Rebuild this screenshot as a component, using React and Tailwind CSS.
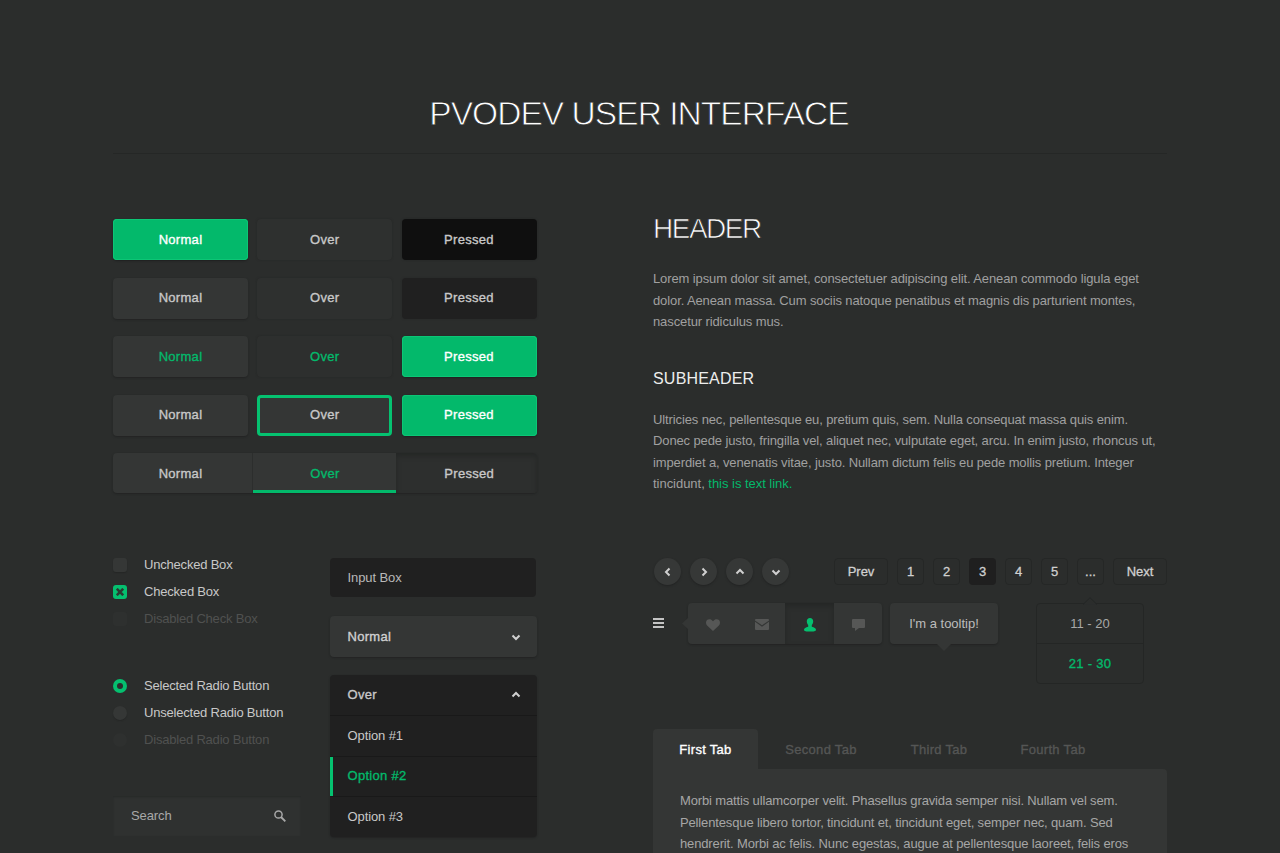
import { useState } from 'react';
import { clsx } from 'clsx';

const medium = '[-webkit-text-stroke:0.35px_currentColor] tracking-[0.3px]';

const buttonStyles = {
  green: 'bg-[#03b96b] text-white shadow-[inset_0_0_0_1px_#0cc676,0_1px_2px_#1f2020]',
  raised: 'bg-[#343635] text-[#c8c8c8] shadow-[0_1px_2px_#222323]',
  raisedGreen: 'bg-[#343635] text-[#03b96b] shadow-[0_1px_2px_#222323]',
  flat: 'bg-[#2e302f] text-[#c8c8c8] shadow-[0_0_2px_#252626]',
  flatGreen: 'bg-[#2d2f2e] text-[#03b96b] shadow-[0_0_2px_#252626]',
  black: 'bg-[#0f0f0f] text-[#c8c8c8] shadow-[0_0_2px_#222323]',
  dark: 'bg-[#202020] text-[#c8c8c8] shadow-[0_0_2px_#262727]',
  outline: 'bg-[#343635] text-[#c8c8c8] border-3 border-[#05c270]',
};

const buttonRows = [
  ['green', 'flat', 'black'],
  ['raised', 'flat', 'dark'],
  ['raisedGreen', 'flatGreen', 'green'],
  ['raised', 'outline', 'green'],
];

const buttonLabels = ['Normal', 'Over', 'Pressed'];

const chevrons = {
  left: 'M6.5 1.5 3 5l3.5 3.5',
  right: 'M3.5 1.5 7 5 3.5 8.5',
  up: 'M1.5 6.5 5 3l3.5 3.5',
  down: 'M1.5 3.5 5 7l3.5-3.5',
};

const Chevron = ({ direction }) => (
  <svg width="10" height="10" viewBox="0 0 10 10" fill="none" stroke="#d0d0d0" strokeWidth="2">
    <path d={chevrons[direction]} />
  </svg>
);

const Heart = () => (
  <svg width="14" height="12" viewBox="0 0 14 12" fill="currentColor">
    <path d="M7 12 1.1 6.4C-.4 4.9-.3 2.4 1 1.1 2.6-.4 5.2-.2 7 2.2 8.8-.2 11.4-.4 13 1.1c1.3 1.3 1.4 3.8-.1 5.3z" />
  </svg>
);

const Mail = () => (
  <svg width="14" height="11" viewBox="0 0 14 11" fill="currentColor">
    <path d="M1 0h12a1 1 0 0 1 1 1v.4L7 6.3 0 1.4V1a1 1 0 0 1 1-1z" />
    <path d="M0 2.800 7 7.700l7-4.900V10a1 1 0 0 1-1 1H1a1 1 0 0 1-1-1z" />
  </svg>
);

const User = () => (
  <svg width="12" height="14" viewBox="0 0 12 14" fill="currentColor">
    <path d="M6 0c2 0 3.2 1.3 3.2 3.3 0 1.5-.5 2.8-1.4 3.7v1.7c2.5.5 4.2 1.6 4.2 3 0 1.500-2.400 1.800-6 1.800s-6-.3-6-1.800c0-1.400 1.700-2.500 4.200-3V7C3.300 6.100 2.800 4.800 2.800 3.300 2.800 1.300 4 0 6 0z" />
  </svg>
);

const Comment = () => (
  <svg width="13" height="12" viewBox="0 0 13 12" fill="currentColor">
    <path d="M1 0h11a1 1 0 0 1 1 1v7a1 1 0 0 1-1 1H7l-4 3V9H1a1 1 0 0 1-1-1V1a1 1 0 0 1 1-1z" />
  </svg>
);

const iconItems = [Heart, Mail, User, Comment];

const ButtonGrid = () => (
  <div className="flex w-[423.5px] flex-col gap-[17.5px] text-[13px]">
    {buttonRows.map((row, i) => (
      <div key={i} className="flex justify-between">
        {row.map((style, j) => (
          <button
            key={j}
            className={clsx('h-[41px] w-[135px] rounded', medium, buttonStyles[style])}
          >
            {buttonLabels[j]}
          </button>
        ))}
      </div>
    ))}

    {/* Segmented button */}
    <div className={clsx('flex h-10 overflow-hidden rounded bg-[#343635] text-[#c8c8c8] shadow-[0_1px_2px_#222323]', medium)}>
      <button className="w-[140px] border-r border-[#2c2e2d] pt-px pr-1">Normal</button>
      <button className="w-[143px] border-b-3 border-[#03b96b] pt-1 pl-px text-[#03b96b]">Over</button>
      <button className="flex-1 bg-[#2d2f2e] pt-px pl-1.5 shadow-[inset_0_3px_5px_#252726]">Pressed</button>
    </div>
  </div>
);

const Choice = ({ round, checked, disabled, children }) => (
  <label className={clsx('flex h-[27px] items-center text-[13px] tracking-[-0.2px] whitespace-nowrap', disabled ? 'text-[#505150]' : 'text-[#c8c8c8]')}>
    <span
      className={clsx(
        'mr-[17px] flex size-3.5 items-center justify-center',
        round ? 'rounded-full' : 'rounded-[3px]',
        checked ? 'bg-[#05bf6f]' : disabled ? 'bg-[#2e302f]' : 'bg-[#353736] shadow-[0_1px_1px_#252726]'
      )}
    >
      {checked && round && <span className="size-1.5 rounded-full bg-[#2b2d2c]" />}
      {checked && !round && (
        <svg width="8" height="8" viewBox="0 0 8 8" stroke="#2b3a32" strokeWidth="2.6">
          <path d="m.8.8 6.400 6.400M7.200.8.8 7.200" />
        </svg>
      )}
    </span>
    {children}
  </label>
);

const Dropdown = () => {
  const [selected, setSelected] = useState(2);

  return (
    <div className="h-[162px] rounded bg-[#202020] text-[13px] text-[#c8c8c8] shadow-[0_1px_2px_#222323]">
      <div className={clsx('flex h-10 items-center justify-between pr-4 pl-[18px]', medium)}>
        Over
        <Chevron direction="up" />
      </div>
      {[1, 2, 3].map((n) => (
        <div
          key={n}
          onClick={() => setSelected(n)}
          className={clsx(
            'flex h-[40.5px] items-center border-t border-[#191919] pb-px pl-[18px]',
            n === selected
              ? 'tracking-[0.3px] text-[#03b96b] shadow-[inset_3px_0_0_#05c270] [-webkit-text-stroke:0.35px_currentColor]'
              : 'tracking-[-0.1px]'
          )}
        >
          Option #{n}
        </div>
      ))}
    </div>
  );
};

const PageButton = ({ wide, active, children }) => (
  <button
    className={clsx(
      'h-[27px] rounded text-[13px] text-[#d0d0d0] [-webkit-text-stroke:0.3px_currentColor]',
      wide ? 'w-[54px]' : 'w-[27px]',
      active ? 'bg-[#1f1f1f]' : 'border border-[#252726]'
    )}
  >
    {children}
  </button>
);

const IconBar = () => (
  <div className="relative flex h-[41px] w-[194px] rounded bg-[#343635] text-[#565756] shadow-[0_1px_2px_#222323]">
    <svg className="absolute top-3.5 -left-1.5" width="7" height="13" viewBox="0 0 7 13" fill="#343635">
      <path d="M7 0v13L0 6.500z" />
    </svg>
    {iconItems.map((Icon, i) => (
      <button
        key={i}
        className={clsx(
          'flex flex-1 items-center justify-center pt-0.5 pl-0.5',
          i === 2 && 'bg-[#2c2e2d] text-[#05bf6f] shadow-[inset_0_3px_5px_#252726]'
        )}
      >
        <Icon />
      </button>
    ))}
  </div>
);

const tabs = [
  { label: 'First Tab', width: 'w-[105px]' },
  { label: 'Second Tab', width: 'w-[126px]' },
  { label: 'Third Tab', width: 'w-[110px]' },
  { label: 'Fourth Tab', width: 'w-[118px]' },
];

const Tabs = () => {
  const [active, setActive] = useState(0);

  return (
    <div>
      <div className="flex">
        {tabs.map((tab, i) => (
          <button
            key={tab.label}
            onClick={() => setActive(i)}
            className={clsx(
              'h-10 rounded-t pt-px text-[13px]',
              medium,
              tab.width,
              i === active ? 'bg-[#343635] text-white' : 'text-[#555655]'
            )}
          >
            {tab.label}
          </button>
        ))}
      </div>
      <div className="h-24 rounded-tr bg-[#343635] pt-[21px] pl-[27px] text-[13px] leading-[21.5px] tracking-[-0.14px] whitespace-nowrap text-[#a6a6a6]">
        <p>Morbi mattis ullamcorper velit. Phasellus gravida semper nisi. Nullam vel sem.</p>
        <p>Pellentesque libero tortor, tincidunt et, tincidunt eget, semper nec, quam. Sed</p>
        <p>hendrerit. Morbi ac felis. Nunc egestas, augue at pellentesque laoreet, felis eros</p>
      </div>
    </div>
  );
};

export default function App() {
  return (
    <div className="h-[853px] w-[1280px] overflow-hidden bg-[#2b2d2c] px-[113px] font-['Liberation_Sans',Arial,sans-serif] antialiased">
      <header className="border-b border-[#252726] pt-[94px] pb-[19px] text-center">
        <h1 className="pr-0.5 text-[33.5px] leading-10 tracking-[-0.95px] whitespace-nowrap text-white [-webkit-text-stroke:0.8px_#2b2d2c]">
          PVODEV USER INTERFACE
        </h1>
      </header>

      <main className="mt-[65px] flex justify-between">
        {/* Left column */}
        <section className="w-[424px]">
          <ButtonGrid />

          <div className="mt-[58.5px] flex justify-between">
            <div className="w-[188px]">
              <Choice>Unchecked Box</Choice>
              <Choice checked>Checked Box</Choice>
              <Choice disabled>Disabled Check Box</Choice>
              <div className="mt-10">
                <Choice round checked>Selected Radio Button</Choice>
                <Choice round>Unselected Radio Button</Choice>
                <Choice round disabled>Disabled Radio Button</Choice>
              </div>
              <div className="mt-[42px] flex h-10 items-center justify-between bg-[#2f3130] pr-[15px] pl-[18px] text-[13px] tracking-[-0.1px] text-[#a8a8a8] shadow-[inset_0_1px_2px_#272928]">
                Search
                <svg width="12" height="12" viewBox="0 0 12 12" fill="none" stroke="#a8a8a8">
                  <circle cx="4.500" cy="4.500" r="3.600" strokeWidth="1.500" />
                  <path d="m7 7 4.300 4.300" strokeWidth="1.900" />
                </svg>
              </div>
            </div>

            <div className="mt-[6.5px] w-[207.5px]">
              <div className="mr-px flex h-[39px] items-center rounded bg-[#202020] pl-[18px] text-[13px] tracking-[-0.1px] text-[#b8b8b8]">
                Input Box
              </div>
              <div className={clsx('mt-[19px] mb-[18px] flex h-[41px] items-center justify-between rounded bg-[#343635] pr-4 pl-[18px] text-[13px] text-[#d0d0d0] shadow-[0_1px_2px_#222323]', medium)}>
                Normal
                <Chevron direction="down" />
              </div>
              <Dropdown />
            </div>
          </div>
        </section>

        {/* Right column */}
        <section className="w-[514px]">
          <h2 className="-mt-1.5 text-[28px] leading-8 tracking-[-1.5px] text-white [-webkit-text-stroke:0.7px_#2b2d2c]">HEADER</h2>
          <div className="mt-[23px] text-[13px] leading-[21.5px] tracking-[-0.11px] whitespace-nowrap text-[#a0a0a0]">
            <p>Lorem ipsum dolor sit amet, consectetuer adipiscing elit. Aenean commodo ligula eget</p>
            <p>dolor. Aenean massa. Cum sociis natoque penatibus et magnis dis parturient montes,</p>
            <p>nascetur ridiculus mus.</p>
          </div>

          <h3 className="mt-[34px] text-base leading-6 tracking-[0.2px] text-[#ededed]">SUBHEADER</h3>
          <div className="mt-[18px] text-[13px] leading-[21.5px] tracking-[-0.12px] whitespace-nowrap text-[#a0a0a0]">
            <p>Ultricies nec, pellentesque eu, pretium quis, sem. Nulla consequat massa quis enim.</p>
            <p>Donec pede justo, fringilla vel, aliquet nec, vulputate eget, arcu. In enim justo, rhoncus ut,</p>
            <p>imperdiet a, venenatis vitae, justo. Nullam dictum felis eu pede mollis pretium. Integer</p>
            <p className="tracking-[-0.03px]">
              tincidunt, <a className="text-[#03b96b]">this is text link.</a>
            </p>
          </div>

          <div className="mt-[63.5px] flex items-center justify-between pl-px">
            <div className="flex gap-[9px]">
              {['left', 'right', 'up', 'down'].map((direction) => (
                <button key={direction} className="flex size-[27px] items-center justify-center rounded-full bg-[#363837] shadow-[0_1px_2px_#222323]">
                  <Chevron direction={direction} />
                </button>
              ))}
            </div>
            <div className="flex gap-[9px]">
              <PageButton wide>Prev</PageButton>
              {[1, 2, 3, 4, 5].map((n) => (
                <PageButton key={n} active={n === 3}>{n}</PageButton>
              ))}
              <PageButton>...</PageButton>
              <PageButton wide>Next</PageButton>
            </div>
          </div>

          <div className="mt-[18px] flex h-[81px] items-start">
            <div className="mt-[15px] mr-6 flex w-[11px] flex-col gap-0.5">
              <span className="h-0.5 bg-[#c4c4c4]" />
              <span className="h-0.5 bg-[#c4c4c4]" />
              <span className="h-0.5 bg-[#c4c4c4]" />
            </div>
            <IconBar />
            <div className="relative ml-2 flex h-[41px] w-[108px] items-center justify-center rounded bg-[#343635] text-[13px] text-[#bcbcbc] shadow-[0_1px_2px_#222323]">
              I'm a tooltip!
              <svg className="absolute top-10 left-[46px]" width="16" height="8" viewBox="0 0 16 8" fill="#343635">
                <path d="M0 0h16L8 8z" />
              </svg>
            </div>
            <div className="relative ml-[38px] w-[108px] rounded border border-[#242625] text-center text-[13px]">
              <svg className="absolute -top-[7px] left-[46px]" width="14" height="8" viewBox="0 0 14 8" fill="#2b2d2c" stroke="#242625">
                <path d="M0 7.500 7 .7l7 6.800" />
              </svg>
              <div className="h-10 border-b border-[#242625] leading-10 text-[#a8a8a8]">11 - 20</div>
              <div className={clsx('h-[39px] leading-[39px] text-[#03b96b]', medium)}>21 - 30</div>
            </div>
          </div>

          <div className="mt-[45px]">
            <Tabs />
          </div>
        </section>
      </main>
    </div>
  );
}
